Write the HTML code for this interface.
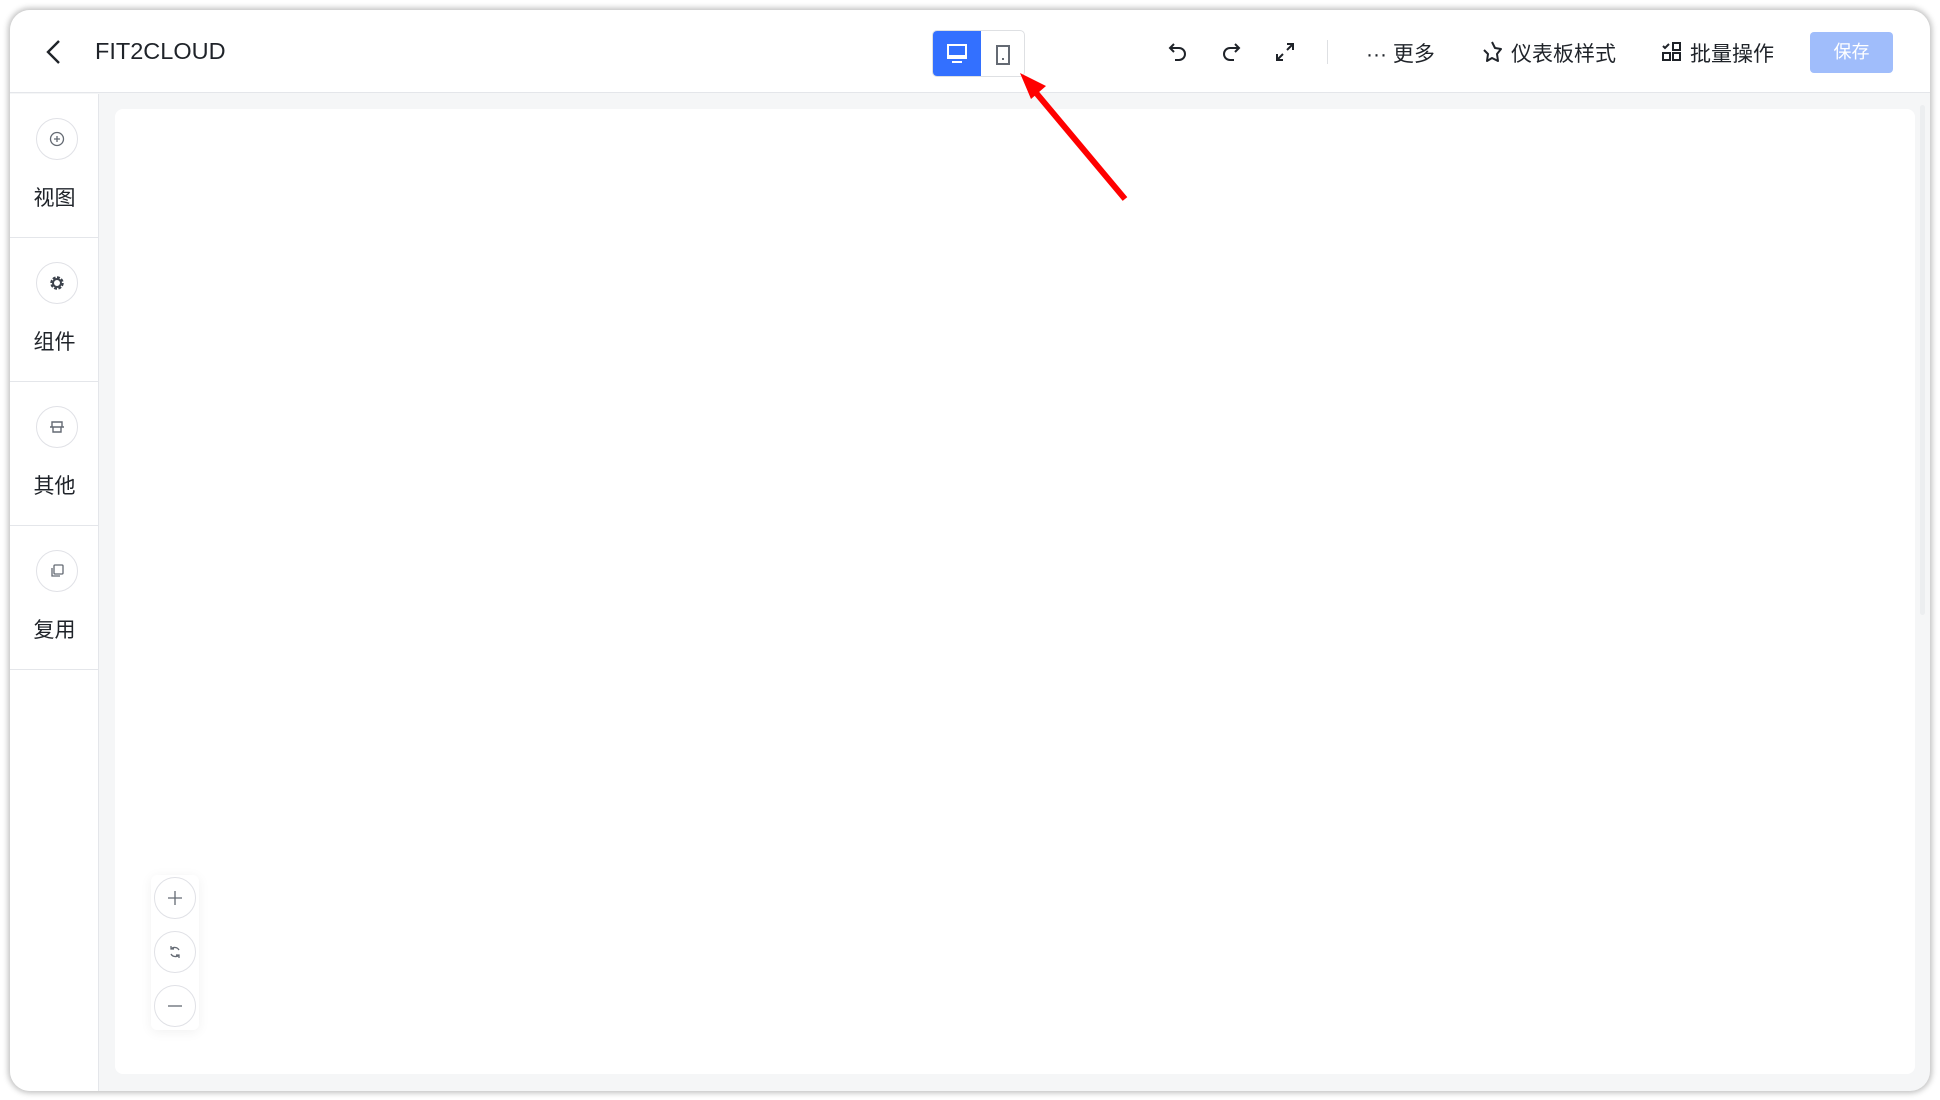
<!DOCTYPE html>
<html><head><meta charset="utf-8"><style>
*{box-sizing:border-box;margin:0;padding:0}
body{width:1940px;height:1100px;background:#fff;position:relative;overflow:hidden;font-family:"Liberation Sans","Noto Sans CJK SC",sans-serif;color:#1f2329}
.win{position:absolute;left:10px;top:10px;width:1920px;height:1081px;border-radius:20px;background:#f5f6f7;box-shadow:0 0 6px 2px rgba(0,0,0,.25);overflow:hidden}
.hdr{position:absolute;left:0;top:0;width:1920px;height:83px;background:#fff;border-bottom:1px solid #e4e6ea}
.ab{position:absolute}
.side{position:absolute;left:0;top:84px;width:89px;bottom:0;background:#fff;border-right:1px solid #e4e6ea}
.item{position:absolute;left:0;width:89px;height:144px;border-bottom:1px solid #e4e6ea}
.circ{position:absolute;left:26px;width:42px;height:42px;border-radius:50%;border:1px solid #e0e1e6;background:#fff;display:flex;align-items:center;justify-content:center}
.lbl{position:absolute;left:0;width:89px;text-align:center;font-size:21px}
.canvas{position:absolute;left:105px;top:99px;width:1800px;height:965px;background:#fff;border-radius:8px}
.tb{position:absolute;font-size:21px;color:#1f2329;top:40px}
</style></head><body>
<div class="win">
<div class="hdr">
<svg class="ab" style="left:35px;top:29px" width="18" height="26" viewBox="0 0 18 26"><path d="M14 2L3 13l11 11" fill="none" stroke="#1f2329" stroke-width="2.4"/></svg>
<div class="ab" style="left:85px;top:28px;font-size:23.5px">FIT2CLOUD</div>
<div class="ab" style="left:922px;top:20px;width:93px;height:47px;border:1px solid #dee0e3;border-radius:5px;overflow:hidden;background:#fff">
<div style="position:absolute;left:0;top:0;width:48px;height:47px;background:#3370ff"></div>
<svg class="ab" style="left:13px;top:13px" width="22" height="20" viewBox="0 0 22 20"><rect x="2" y="1" width="18" height="13" fill="none" stroke="#fff" stroke-width="2"/><rect x="2" y="11" width="18" height="3" fill="#fff"/><rect x="6" y="17" width="10" height="2" fill="#fff"/></svg>
<svg class="ab" style="left:62px;top:13px" width="16" height="22" viewBox="0 0 16 22"><rect x="2" y="2" width="12" height="18" fill="none" stroke="#646a73" stroke-width="2"/><rect x="7" y="14" width="2" height="2" fill="#646a73"/></svg>
</div>
<svg class="ab" style="left:1157px;top:30px" width="22" height="24" viewBox="0 0 22 24"><path d="M7 4L3 8l4 4M3 8h9a6 6 0 010 12H8" fill="none" stroke="#1f2329" stroke-width="2"/></svg>
<svg class="ab" style="left:1210px;top:30px" width="22" height="24" viewBox="0 0 22 24"><path d="M15 4l4 4-4 4M19 8h-9a6 6 0 000 12h4" fill="none" stroke="#1f2329" stroke-width="2"/></svg>
<svg class="ab" style="left:1264px;top:31px" width="22" height="22" viewBox="0 0 22 22"><path d="M13 3h6v6M19 3l-6 6M9 19H3v-6M3 19l6-6" fill="none" stroke="#1f2329" stroke-width="2"/></svg>
<div class="ab" style="left:1317px;top:30px;width:1px;height:24px;background:#dee0e3"></div>
<div class="tb" style="left:1356px;top:28px">··· 更多</div>
<svg class="ab" style="left:1473px;top:30px" width="24" height="24" viewBox="0 0 24 24"><path d="M9 2l3 6 6 1-4 5 1 7-6-3-5 3 1-7-4-4" fill="none" stroke="#1f2329" stroke-width="2" stroke-linejoin="round"/></svg>
<div class="tb" style="left:1501px;top:28px">仪表板样式</div>
<svg class="ab" style="left:1651px;top:31px" width="22" height="22" viewBox="0 0 22 22"><path d="M2 5l2 2 4-4" fill="none" stroke="#1f2329" stroke-width="2"/><rect x="12" y="2" width="7" height="7" fill="none" stroke="#1f2329" stroke-width="2"/><rect x="2" y="12" width="7" height="7" fill="none" stroke="#1f2329" stroke-width="2"/><rect x="12" y="12" width="7" height="7" fill="none" stroke="#1f2329" stroke-width="2"/></svg>
<div class="tb" style="left:1680px;top:28px">批量操作</div>
<div class="ab" style="left:1800px;top:22px;width:83px;height:41px;border-radius:4px;background:#a0bdfb;color:#fff;font-size:18px;text-align:center;line-height:41px">保存</div>
</div>
<div class="side">
<div class="item" style="top:0"><div class="circ" style="top:24px"><svg width="16" height="16" viewBox="0 0 16 16"><circle cx="8" cy="8" r="6.5" fill="none" stroke="#646a73" stroke-width="1.3"/><path d="M8 5v6M5 8h6" stroke="#646a73" stroke-width="1.3"/></svg></div><div class="lbl" style="top:88px">视图</div></div>
<div class="item" style="top:144px"><div class="circ" style="top:24px"><svg width="18" height="18" viewBox="0 0 18 18"><circle cx="9" cy="9" r="5" fill="none" stroke="#3d434d" stroke-width="3.5" stroke-dasharray="2.6 1.3"/><circle cx="9" cy="9" r="4" fill="none" stroke="#3d434d" stroke-width="2"/></svg></div><div class="lbl" style="top:88px">组件</div></div>
<div class="item" style="top:288px"><div class="circ" style="top:24px"><svg width="18" height="16" viewBox="0 0 18 16"><path d="M4 3h10v5H4zM2 8h14M5 8v5h8V8" fill="none" stroke="#646a73" stroke-width="1.4"/></svg></div><div class="lbl" style="top:88px">其他</div></div>
<div class="item" style="top:432px"><div class="circ" style="top:24px"><svg width="16" height="16" viewBox="0 0 16 16"><rect x="5" y="2" width="9" height="9" rx="1" fill="none" stroke="#646a73" stroke-width="1.3"/><path d="M3 5v8h8" fill="none" stroke="#646a73" stroke-width="1.3"/></svg></div><div class="lbl" style="top:88px">复用</div></div>
</div>
<div class="canvas"></div>
<div class="ab" style="left:1910px;top:95px;width:5px;height:510px;background:#eceef0;border-radius:3px"></div>
<div class="ab" style="left:141px;top:865px;width:48px;height:155px;background:#fff;border-radius:6px;box-shadow:0 2px 12px rgba(0,0,0,.06)">
<div class="circ" style="left:3px;top:2px"><svg width="16" height="16"><path d="M8 1v14M1 8h14" stroke="#646a73" stroke-width="1.3"/></svg></div>
<div class="circ" style="left:3px;top:56px"><svg width="14" height="14" viewBox="0 0 14 14"><path d="M11 5A5 5 0 003 4M3 9a5 5 0 008 1M3 1v3h3M11 13v-3H8" fill="none" stroke="#646a73" stroke-width="1.3"/></svg></div>
<div class="circ" style="left:3px;top:110px"><svg width="16" height="16"><path d="M1 8h14" stroke="#646a73" stroke-width="1.3"/></svg></div>
</div>
</div>
<svg class="ab" style="left:0;top:0" width="1940" height="1100"><line x1="1125" y1="199" x2="1032" y2="88" stroke="#f00" stroke-width="6"/><polygon points="1020,73 1046,86 1031,99" fill="#f00"/></svg>
</body></html>
